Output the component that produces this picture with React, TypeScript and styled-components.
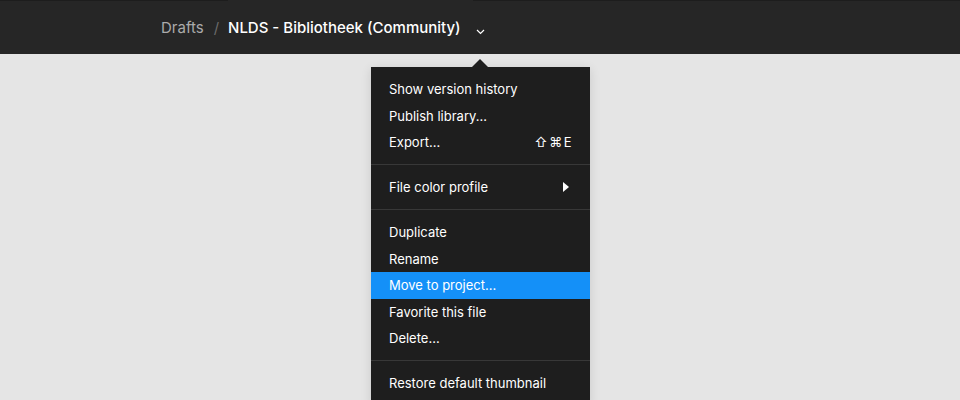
import React from 'react';
import styled, { createGlobalStyle } from 'styled-components';

const GlobalStyle = createGlobalStyle`
  html, body {
    margin: 0;
    padding: 0;
    background: #e5e5e5;
    font-family: Inter, "Noto Sans", sans-serif;
    -webkit-font-smoothing: antialiased;
  }
`

const Page = styled.div`
  position: relative;
  width: 960px;
  height: 400px;
  overflow: hidden;
  background: #e5e5e5;
`

// tab strip edge: dark line with a gap under the active tab
const TopBar = styled.header`
  height: 54px;
  background:
    linear-gradient(to right, #1d1d1d 228px, transparent 228px, transparent 473px, #1d1d1d 473px) top / 100% 1px no-repeat,
    #262626;
  box-sizing: border-box;
  display: flex;
  align-items: center;
  padding-left: 161px;
  padding-top: 1px;
  padding-bottom: 1px;
`

const Crumb = styled.span<{ $current?: boolean }>`
  font-size: 15px;
  font-weight: ${p => (p.$current ? 500 : 400)};
  color: ${p => (p.$current ? '#ffffff' : '#ababab')};
`

const Slash = styled.span`
  color: #6b6b6b;
  font-size: 15px;
  margin: 0 9px 0 10px;
`

const Chevron = styled.svg`
  margin-left: 15px;
  margin-top: 9px;
`

const Menu = styled.div`
  position: absolute;
  left: 371px;
  top: 67px;
  width: 219px;
  background: #1e1e1e;
  padding: 9px 0;
  box-shadow: 0 2px 10px rgba(0, 0, 0, 0.12);

  &::before {
    content: '';
    position: absolute;
    top: -8px;
    left: 101px;
    border-left: 8px solid transparent;
    border-right: 8px solid transparent;
    border-bottom: 8px solid #1e1e1e;
  }
`

const Item = styled.div<{ $active?: boolean }>`
  height: 26.5px;
  display: flex;
  align-items: center;
  justify-content: space-between;
  padding: 0 17px 0 18px;
  font-size: 13px;
  color: #ffffff;
  background: ${p => (p.$active ? '#1490f8' : 'transparent')};
`

const Shortcut = styled.span`
  font-size: 13px;
  letter-spacing: 1.5px;
  color: #ffffff;
`

const SubArrow = styled.span`
  width: 0;
  height: 0;
  border-top: 5px solid transparent;
  border-bottom: 5px solid transparent;
  border-left: 6px solid #ffffff;
  margin-right: 4px;
`

const Separator = styled.div`
  height: 1px;
  background: #383838;
  margin: 8.75px 0;
`

export default function App() {
  return (
    <Page>
      <GlobalStyle />
      <TopBar>
        <Crumb>Drafts</Crumb>
        <Slash>/</Slash>
        <Crumb $current>NLDS - Bibliotheek (Community)</Crumb>
        <Chevron width="9" height="6" viewBox="0 0 9 6">
          <path d="M1 1l3.5 3.5L8 1" stroke="#ffffff" strokeWidth="1.2" fill="none" />
        </Chevron>
      </TopBar>
      <Menu>
        <Item>Show version history</Item>
        <Item>Publish library...</Item>
        <Item>
          Export...
          <Shortcut>⇧⌘E</Shortcut>
        </Item>
        <Separator />
        <Item>
          File color profile
          <SubArrow />
        </Item>
        <Separator />
        <Item>Duplicate</Item>
        <Item>Rename</Item>
        <Item $active>Move to project...</Item>
        <Item>Favorite this file</Item>
        <Item>Delete...</Item>
        <Separator />
        <Item>Restore default thumbnail</Item>
      </Menu>
    </Page>
  );
}
